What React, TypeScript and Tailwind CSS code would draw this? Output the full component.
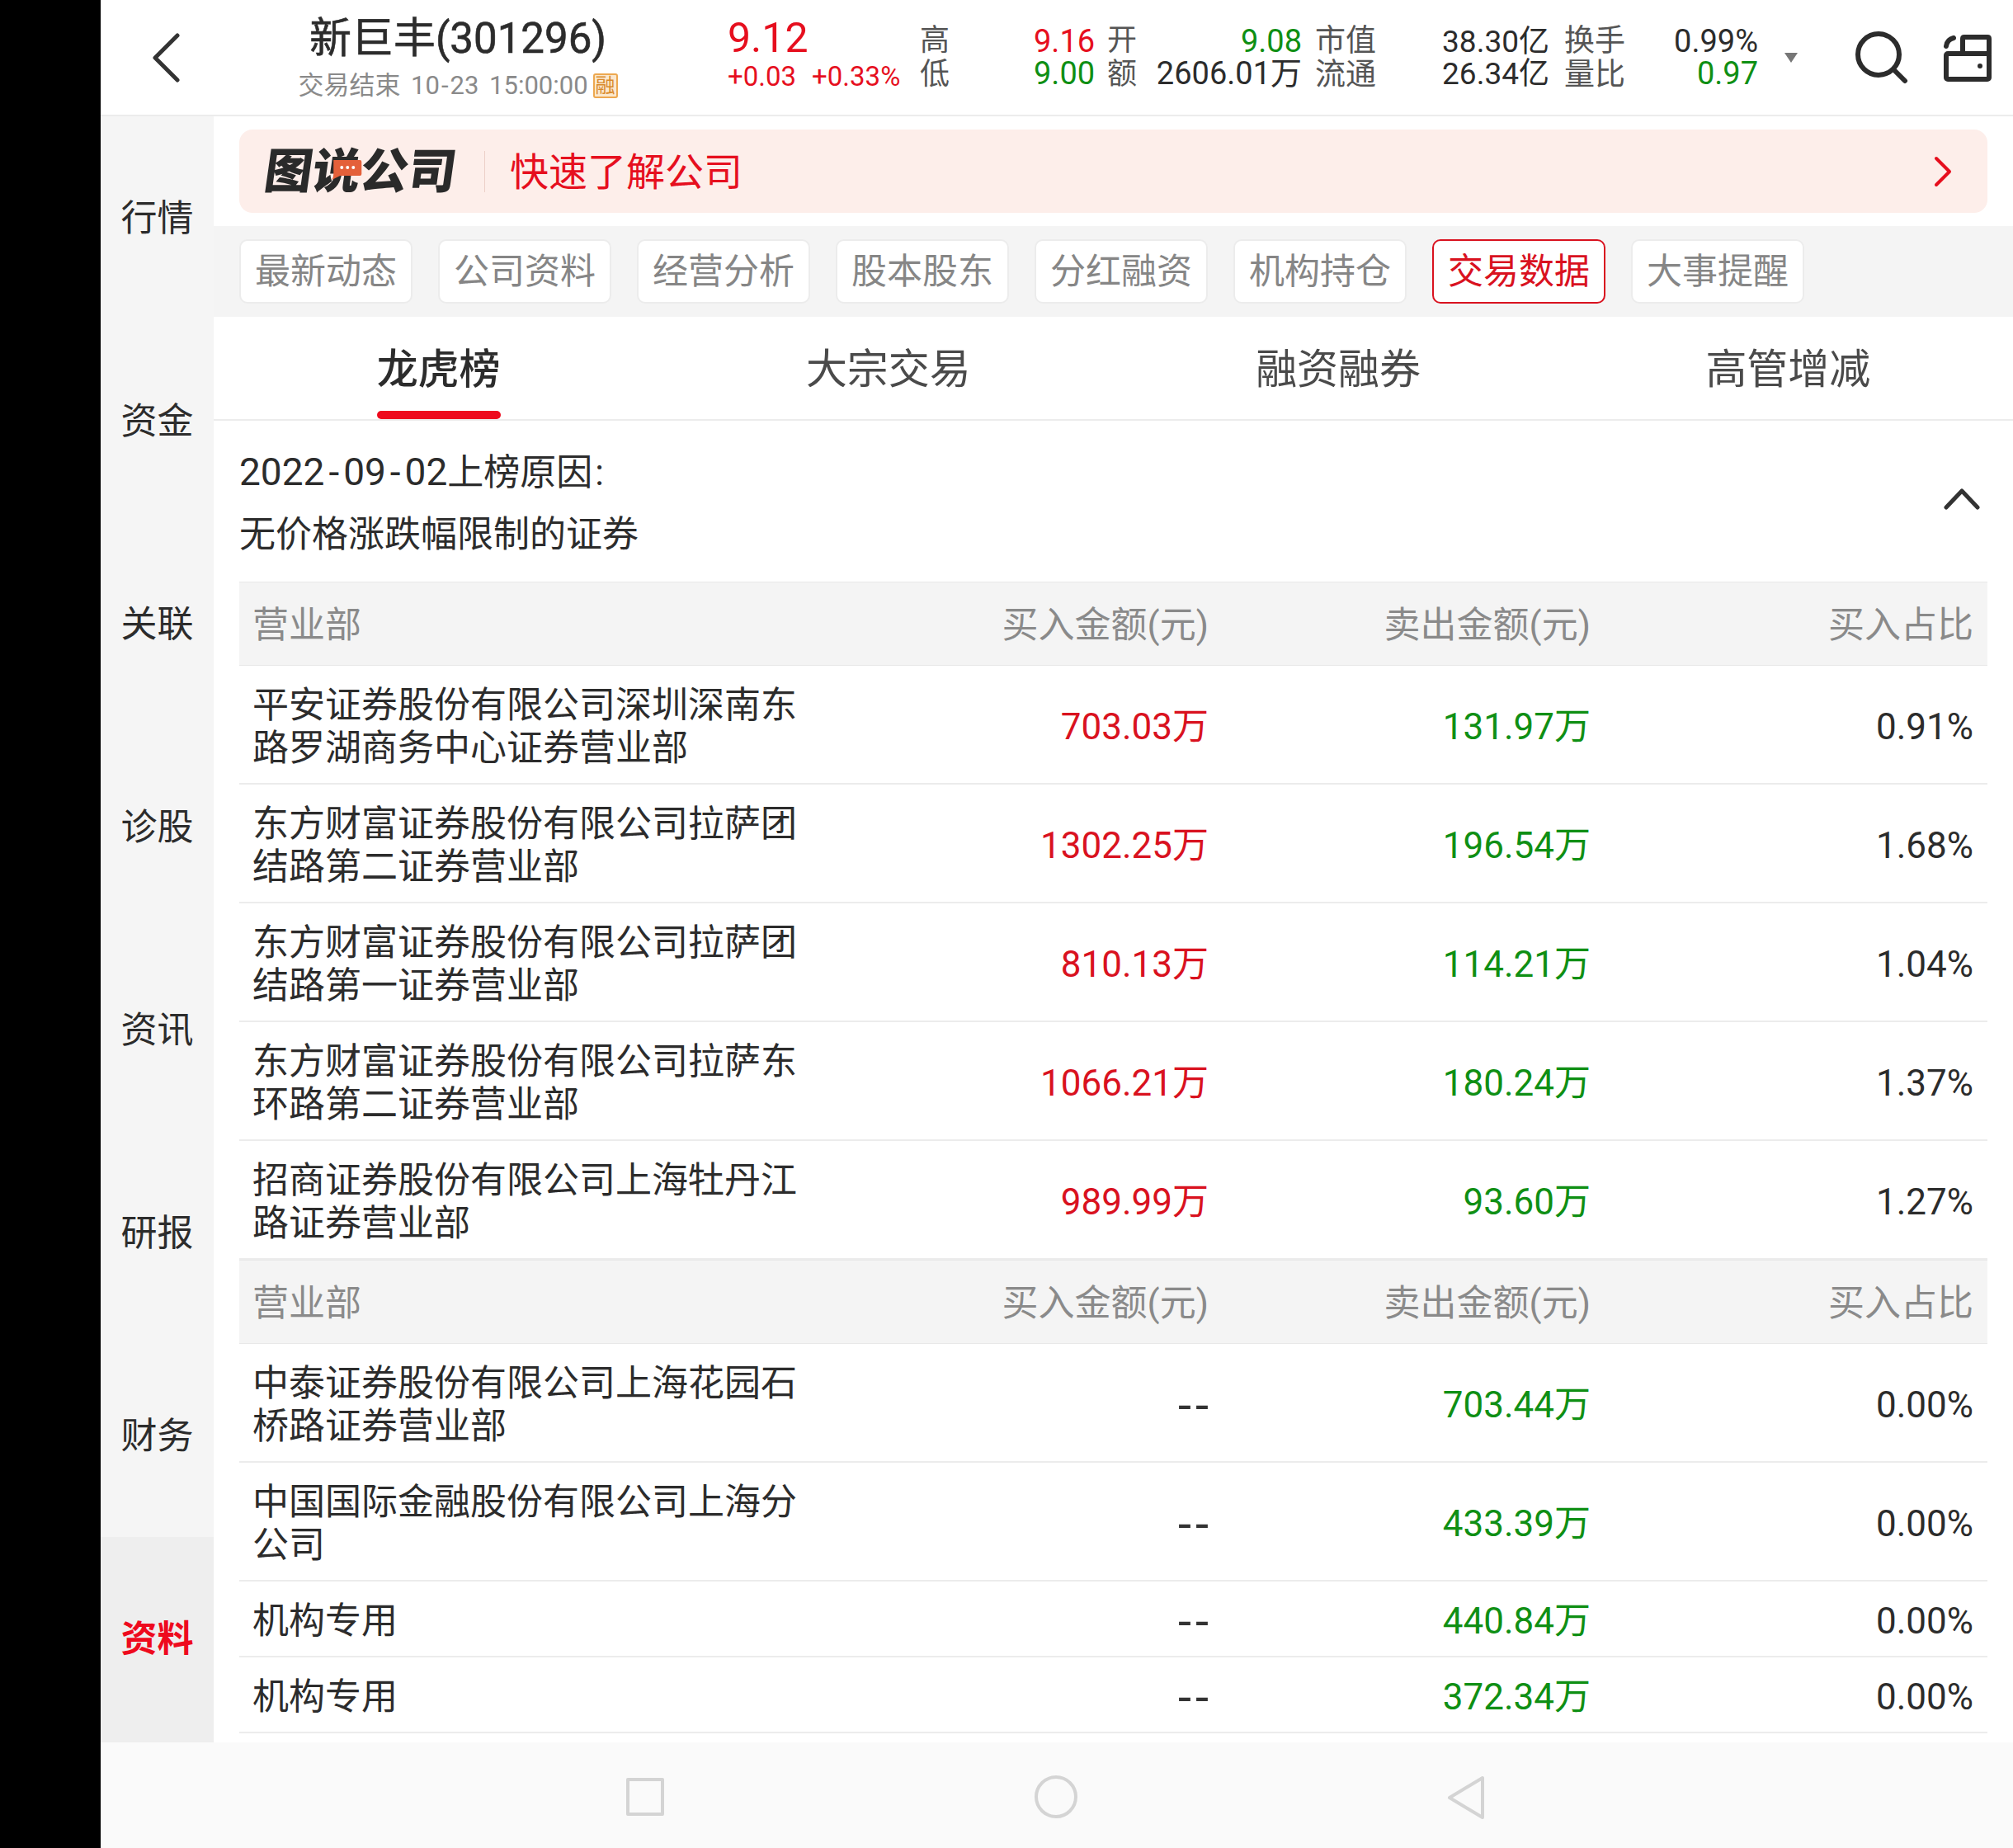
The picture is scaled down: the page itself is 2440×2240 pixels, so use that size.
const font = { fontFamily: 'Roboto, "Noto Sans CJK SC", sans-serif' };

const sideItems = ["行情", "资金", "关联", "诊股", "资讯", "研报", "财务", "资料"];
const chips = ["最新动态", "公司资料", "经营分析", "股本股东", "分红融资", "机构持仓", "交易数据", "大事提醒"];
const tabs = ["龙虎榜", "大宗交易", "融资融券", "高管增减"];

type Row = { name: string[]; buy: string; sell: string; ratio: string };
const buyRows: Row[] = [
  { name: ["平安证券股份有限公司深圳深南东", "路罗湖商务中心证券营业部"], buy: "703.03万", sell: "131.97万", ratio: "0.91%" },
  { name: ["东方财富证券股份有限公司拉萨团", "结路第二证券营业部"], buy: "1302.25万", sell: "196.54万", ratio: "1.68%" },
  { name: ["东方财富证券股份有限公司拉萨团", "结路第一证券营业部"], buy: "810.13万", sell: "114.21万", ratio: "1.04%" },
  { name: ["东方财富证券股份有限公司拉萨东", "环路第二证券营业部"], buy: "1066.21万", sell: "180.24万", ratio: "1.37%" },
  { name: ["招商证券股份有限公司上海牡丹江", "路证券营业部"], buy: "989.99万", sell: "93.60万", ratio: "1.27%" },
];
const sellRows: Row[] = [
  { name: ["中泰证券股份有限公司上海花园石", "桥路证券营业部"], buy: "--", sell: "703.44万", ratio: "0.00%" },
  { name: ["中国国际金融股份有限公司上海分", "公司"], buy: "--", sell: "433.39万", ratio: "0.00%" },
  { name: ["机构专用"], buy: "--", sell: "440.84万", ratio: "0.00%" },
  { name: ["机构专用"], buy: "--", sell: "372.34万", ratio: "0.00%" },
];

function TableHead() {
  return (
    <div className="grid grid-cols-[694px_463px_463px_464px] items-center h-[102px] px-[18px] pt-[3px] bg-[#f4f4f4] border-y border-[#e8e8e8] text-[44px] text-[#8a8a8a]">
      <div className="-ml-[2px]">营业部</div>
      <div className="text-right">买入金额(元)</div>
      <div className="text-right">卖出金额(元)</div>
      <div className="text-right">买入占比</div>
    </div>
  );
}

function TableRow({ row }: { row: Row }) {
  const tall = row.name.length > 1;
  return (
    <div className={`grid grid-cols-[694px_463px_463px_464px] items-center px-[18px] pt-[5px] border-b-2 border-[#ececec] text-[44px] ${tall ? "h-[144px]" : "h-[92px]"}`}>
      <div className="-ml-[2px] leading-[52px] text-[#2c2c2c]">
        {row.name.map((l) => (
          <div key={l}>{l}</div>
        ))}
      </div>
      {row.buy === "--" ? (
        <div className="text-right text-[58px] leading-[44px] tracking-[5px] -mr-[5px] text-[#333333]">{row.buy}</div>
      ) : (
        <div className="text-right text-[#d9121f]">{row.buy}</div>
      )}
      <div className="text-right text-[#0f8f14]">{row.sell}</div>
      <div className="text-right text-[#2c2c2c]">{row.ratio}</div>
    </div>
  );
}

function Header() {
  return (
    <div className="flex items-center h-[141px] shrink-0 border-b-2 border-[#ececec] bg-white">
      <div className="w-[213px] shrink-0 pl-[60px]">
        <svg width="38" height="60" viewBox="0 0 38 60" fill="none">
          <path d="M33 3 L6 30 L33 57" stroke="#333333" strokeWidth="5" strokeLinecap="round" strokeLinejoin="round" />
        </svg>
      </div>
      <div className="w-[440px] shrink-0 flex flex-col items-center -mt-[1px]">
        <div className="text-[51px] leading-[70px] -mt-[2px] text-[#2c2c2c] [-webkit-text-stroke:0.6px_#2c2c2c]">新巨丰(301296)</div>
        <div className="flex items-center text-[31px] leading-[40px] text-[#8a8a8a] mt-[2px]">
          <span className="[word-spacing:5px]">
            交易结束 10<span className="mx-[2px]">-</span>23 15:00:00
          </span>
          <span className="ml-[6px] w-[30px] h-[30px] flex items-center justify-center bg-[#fbe8cd] border-2 border-[#eda850] rounded-[3px] text-[24px] leading-none text-[#d98a2b]">融</span>
        </div>
      </div>
      <div className="w-[340px] shrink-0 pl-[107px] text-[#e60f1e] -mt-[14px]">
        <div className="text-[50px] leading-[60px]">9.12</div>
        <div className="flex gap-[19px] text-[33px] leading-[34px] whitespace-nowrap">
          <span>+0.03</span>
          <span>+0.33%</span>
        </div>
      </div>
      <div className="w-[138px] shrink-0 text-[36px] leading-[41px] text-[#555555]">
        <div>高</div>
        <div>低</div>
      </div>
      <div className="w-[89px] shrink-0 text-[38px] leading-[39px]">
        <div className="text-[#e60f1e]">9.16</div>
        <div className="text-[#0f8f14]">9.00</div>
      </div>
      <div className="w-[36px] shrink-0 text-[36px] leading-[41px] text-[#555555]">
        <div>开</div>
        <div>额</div>
      </div>
      <div className="w-[200px] shrink-0 text-right text-[38px] leading-[39px] whitespace-nowrap">
        <div className="text-[#0f8f14]">9.08</div>
        <div className="text-[#2c2c2c]">2606.01万</div>
      </div>
      <div className="w-[74px] ml-[16px] shrink-0 text-[37px] leading-[41px] text-[#555555]">
        <div>市值</div>
        <div>流通</div>
      </div>
      <div className="w-[210px] shrink-0 text-right text-[37px] leading-[39px] text-[#2c2c2c]">
        <div>38.30亿</div>
        <div>26.34亿</div>
      </div>
      <div className="w-[74px] ml-[18px] shrink-0 text-[37px] leading-[41px] text-[#555555]">
        <div>换手</div>
        <div>量比</div>
      </div>
      <div className="w-[161px] shrink-0 text-right text-[38px] leading-[39px]">
        <div className="text-[#2c2c2c]">0.99%</div>
        <div className="text-[#0f8f14]">0.97</div>
      </div>
      <svg className="ml-[31px] shrink-0" width="18" height="14" viewBox="0 0 18 14">
        <path d="M1 1 H17 L9 13 Z" fill="#777777" />
      </svg>
      <svg className="ml-[69px] shrink-0" width="64" height="64" viewBox="0 0 64 64" fill="none" stroke="#2c2c2c" strokeWidth="6" strokeLinecap="round">
        <circle cx="28" cy="28" r="25" />
        <path d="M47 47 L60 60" />
      </svg>
      <svg className="ml-[43px] shrink-0" width="58" height="58" viewBox="0 0 58 58" fill="none" stroke="#2c2c2c" strokeWidth="6" strokeLinecap="round" strokeLinejoin="round">
        <rect x="3" y="24" width="52" height="31" rx="2" />
        <path d="M23 24 V6 Q23 4 25 4 H53 Q55 4 55 6 V24" />
        <path d="M3 15 Q4 7 12 5" />
        <circle cx="44" cy="39" r="3" fill="#2c2c2c" stroke="none" />
      </svg>
    </div>
  );
}

function Sidebar() {
  return (
    <div className="w-[137px] shrink-0 flex flex-col bg-[#f5f5f5]">
      {sideItems.map((s) => {
        const active = s === "资料";
        return (
          <div
            key={s}
            className={`flex items-center justify-center text-[44px] pt-[2px] ${active ? "h-[249px] pb-[3px] bg-[#eeeeee] text-[#ee0a1d] font-bold" : "h-[246px] text-[#2c2c2c]"}`}
          >
            {s}
          </div>
        );
      })}
    </div>
  );
}

function Banner() {
  return (
    <div className="bg-white h-[133px] px-[31px] pt-[16px] shrink-0">
      <div className="h-[101px] rounded-[16px] bg-[#fdeeea] flex items-center pl-[31px] pr-[43px]">
        <div className="relative w-[234px] shrink-0 text-[58px] leading-none font-black text-[#2a2a2a] whitespace-nowrap skew-x-[-8deg]">
          图说公司
          <svg className="absolute left-[80px] top-[14px] skew-x-[8deg]" width="38" height="26" viewBox="0 0 38 26">
            <path d="M3 1 H35 Q37 1 37 3 V18 Q37 20 35 20 H11 L1 25 Q3 22 3 18 Z" fill="#e4603a" />
            <circle cx="13" cy="10" r="2" fill="#fff" />
            <circle cx="20" cy="10" r="2" fill="#fff" />
            <circle cx="27" cy="10" r="2" fill="#fff" />
          </svg>
        </div>
        <div className="ml-[32px] w-[1px] h-[50px] bg-[#ecd0c8]" />
        <div className="ml-[30px] pt-[3px] text-[47px] text-[#e60f1e]">快速了解公司</div>
        <svg className="ml-auto" width="22" height="38" viewBox="0 0 22 38" fill="none">
          <path d="M3 3 L19 19 L3 35" stroke="#e60f1e" strokeWidth="4" strokeLinecap="round" strokeLinejoin="round" />
        </svg>
      </div>
    </div>
  );
}

function Chips() {
  return (
    <div className="h-[110px] shrink-0 bg-[#f4f4f4] flex items-center gap-[31px] pl-[31px]">
      {chips.map((c) => {
        const active = c === "交易数据";
        return (
          <div
            key={c}
            className={`w-[210px] h-[78px] rounded-[10px] bg-white border-2 flex items-center justify-center text-[43px] ${active ? "border-[#d9121f] text-[#d9121f]" : "border-[#ececec] text-[#868686]"}`}
          >
            {c}
          </div>
        );
      })}
    </div>
  );
}

function Tabs() {
  return (
    <div className="grid grid-cols-4 h-[126px] shrink-0 bg-white border-b-2 border-[#ececec]">
      {tabs.map((t, i) => (
        <div key={t} className="relative flex items-center justify-center text-[50px] pt-[4px]">
          <span className={i === 0 ? "font-medium text-[#2c2c2c]" : "text-[#4a4a4a]"}>{t}</span>
          {i === 0 && <div className="absolute bottom-0 left-1/2 -translate-x-1/2 w-[150px] h-[10px] rounded-[5px] bg-[#ee0a1d]" />}
        </div>
      ))}
    </div>
  );
}

function Reason() {
  return (
    <div className="flex justify-between h-[195px] px-[31px] pt-[36px] shrink-0 text-[#2c2c2c]">
      <div>
        <div className="text-[44px] leading-[52px]">
          <span className="text-[46px]">
            2022<span className="mx-[5px]">-</span>09<span className="mx-[5px]">-</span>02
          </span>
          上榜原因<span className="ml-[3px]">:</span>
        </div>
        <div className="mt-[23px] text-[44px] leading-[52px]">无价格涨跌幅限制的证券</div>
      </div>
      <svg className="mt-[45px] mr-[9px]" width="44" height="28" viewBox="0 0 44 28" fill="none">
        <path d="M3 24 L22 4 L41 24" stroke="#333333" strokeWidth="5" strokeLinecap="round" strokeLinejoin="round" />
      </svg>
    </div>
  );
}

function NavBar() {
  return (
    <div className="h-[128px] shrink-0 bg-[#fafafa] relative">
      <div className="absolute left-[637px] top-[43px] w-[46px] h-[46px] border-[4px] border-[#d4d4d4] rounded-[2px]" />
      <div className="absolute left-[1132px] top-[40px] w-[52px] h-[52px] border-[4px] border-[#d4d4d4] rounded-full" />
      <svg className="absolute left-[1632px] top-[40px]" width="46" height="54" viewBox="0 0 46 54" fill="none">
        <path d="M43 3 V51 L3 27 Z" stroke="#d4d4d4" strokeWidth="4" strokeLinejoin="round" />
      </svg>
    </div>
  );
}

export default function App() {
  return (
    <div className="flex h-[2240px] w-[2440px] overflow-hidden bg-black" style={font}>
      <div className="w-[122px] shrink-0 bg-black" />
      <div className="flex-1 flex flex-col min-w-0 bg-white">
        <Header />
        <div className="flex flex-1 min-h-0">
          <Sidebar />
          <div className="flex-1 min-w-0 flex flex-col">
            <Banner />
            <Chips />
            <Tabs />
            <Reason />
            <div className="px-[31px]">
              <TableHead />
              {buyRows.map((r) => (
                <TableRow key={r.name.join("")} row={r} />
              ))}
              <TableHead />
              {sellRows.map((r, i) => (
                <TableRow key={i} row={r} />
              ))}
            </div>
          </div>
        </div>
        <NavBar />
      </div>
    </div>
  );
}
